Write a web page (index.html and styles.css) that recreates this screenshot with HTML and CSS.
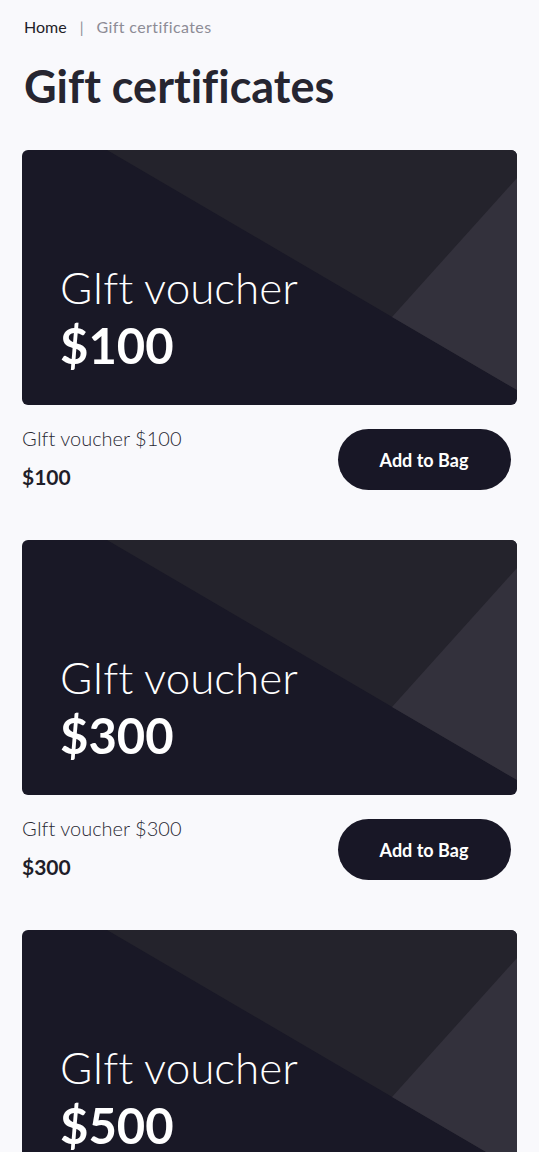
FILE: index.html
```html
<!DOCTYPE html>
<html lang="en">
<head>
<meta charset="utf-8">
<title>Gift certificates</title>
<link rel="stylesheet" href="styles.css">
</head>
<body>
<main class="page">
  <nav class="breadcrumb">
    <a class="crumb-home" href="#">Home</a>
    <span class="crumb-sep">|</span>
    <span class="crumb-current">Gift certificates</span>
  </nav>
  <h1 class="title">Gift certificates</h1>

  <section class="product">
    <div class="voucher">
      <svg class="voucher-bg" viewBox="0 0 495 255" preserveAspectRatio="none">
        <rect width="495" height="255" fill="#191826"/>
        <polygon points="85,0 495,0 495,240" fill="#24232c"/>
        <polygon points="495,28 370,167 495,240" fill="#33313c"/>
      </svg>
      <div class="voucher-text">
        <div class="voucher-label">GIft voucher</div>
        <div class="voucher-amount">$100</div>
      </div>
    </div>
    <div class="product-row">
      <div class="product-info">
        <div class="product-name">GIft voucher $100</div>
        <div class="product-price">$100</div>
      </div>
      <button class="add-btn">Add to Bag</button>
    </div>
  </section>

  <section class="product">
    <div class="voucher">
      <svg class="voucher-bg" viewBox="0 0 495 255" preserveAspectRatio="none">
        <rect width="495" height="255" fill="#191826"/>
        <polygon points="85,0 495,0 495,240" fill="#24232c"/>
        <polygon points="495,28 370,167 495,240" fill="#33313c"/>
      </svg>
      <div class="voucher-text">
        <div class="voucher-label">GIft voucher</div>
        <div class="voucher-amount">$300</div>
      </div>
    </div>
    <div class="product-row">
      <div class="product-info">
        <div class="product-name">GIft voucher $300</div>
        <div class="product-price">$300</div>
      </div>
      <button class="add-btn">Add to Bag</button>
    </div>
  </section>

  <section class="product">
    <div class="voucher">
      <svg class="voucher-bg" viewBox="0 0 495 255" preserveAspectRatio="none">
        <rect width="495" height="255" fill="#191826"/>
        <polygon points="85,0 495,0 495,240" fill="#24232c"/>
        <polygon points="495,28 370,167 495,240" fill="#33313c"/>
      </svg>
      <div class="voucher-text">
        <div class="voucher-label">GIft voucher</div>
        <div class="voucher-amount">$500</div>
      </div>
    </div>
    <div class="product-row">
      <div class="product-info">
        <div class="product-name">GIft voucher $500</div>
        <div class="product-price">$500</div>
      </div>
      <button class="add-btn">Add to Bag</button>
    </div>
  </section>
</main>
</body>
</html>
```
FILE: styles.css
```css
* { box-sizing: border-box; }
html, body {
  margin: 0;
  padding: 0;
  background: #f9f9fc;
}
body {
  font-family: Lato, "Noto Sans", sans-serif;
  font-variant-ligatures: none;
  color: #1f1e29;
}
.page {
  padding: 16px 22px 40px 22px;
}
.breadcrumb {
  display: flex;
  align-items: center;
  gap: 13px;
  padding-left: 2px;
  font-size: 16px;
  line-height: 22px;
}
.crumb-home {
  color: #1f1e29;
  text-decoration: none;
}
.crumb-sep { color: #8d8c96; font-size: 15px; }
.crumb-current { color: #8d8c96; letter-spacing: 0.4px; }
.title {
  margin: 20px 0 0 2px;
  font-size: 45px;
  line-height: 56px;
  font-weight: 700;
  color: #262530;
}
.product {
  margin-top: 36px;
}
.product + .product { margin-top: 50px; }
.voucher {
  position: relative;
  width: 495px;
  height: 255px;
  border-radius: 6px;
  overflow: hidden;
}
.voucher-bg {
  position: absolute;
  inset: 0;
  width: 100%;
  height: 100%;
  display: block;
}
.voucher-text {
  position: relative;
  padding: 111px 0 0 38px;
  color: #ffffff;
}
.voucher-label {
  font-size: 44px;
  font-weight: 300;
  line-height: 52px;
}
.voucher-amount {
  font-size: 49px;
  font-weight: 700;
  line-height: 64px;
}
.product-row {
  display: flex;
  align-items: center;
  gap: 156px;
  margin-top: 24px;
}
.product-info {
  display: flex;
  flex-direction: column;
  gap: 15px;
  margin-top: -4px;
}
.product-name {
  font-size: 20px;
  font-weight: 300;
  line-height: 24px;
  color: #2a2934;
}
.product-price {
  font-size: 21px;
  font-weight: 700;
  line-height: 24px;
  color: #1f1e29;
}
.add-btn {
  flex: none;
  width: 173px;
  height: 61px;
  border: none;
  border-radius: 31px;
  background: #181726;
  color: #ffffff;
  font-family: Lato, "Noto Sans", sans-serif;
  font-size: 18px;
  font-weight: 700;
}
```
